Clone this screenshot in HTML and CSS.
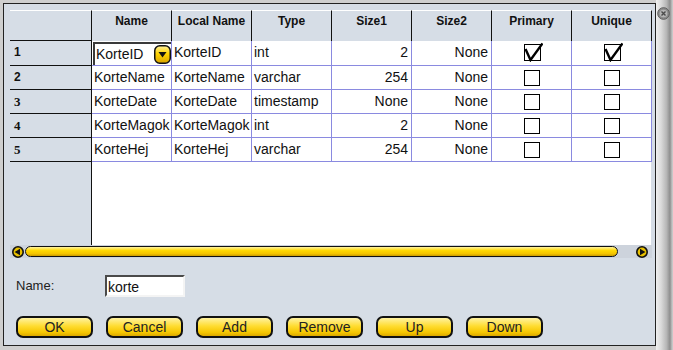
FILE: index.html
```html
<!DOCTYPE html>
<html lang="en">
<head>
    <meta charset="UTF-8">
    <title>Table Editor</title>
    <link rel="stylesheet" href="styles.css">
</head>
<body>
<div class="screen">
    <div class="frame">
        <div class="panel">
            <div class="grid">
                <div class="corner"></div>
                <div class="colHead">Name</div>
                <div class="colHead">Local Name</div>
                <div class="colHead">Type</div>
                <div class="colHead">Size1</div>
                <div class="colHead">Size2</div>
                <div class="colHead">Primary</div>
                <div class="colHead">Unique</div>

                <div class="rowHead">1</div>
                <div class="cell editCell">
                    <div class="editor">
                        <span>KorteID</span>
                        <svg class="comboBtn" width="17" height="19" viewBox="0 0 17 19">
                            <defs>
                                <linearGradient id="cg" x1="0" y1="0" x2="0" y2="1">
                                    <stop offset="0" stop-color="#fff1a0"/>
                                    <stop offset="0.45" stop-color="#ffd400"/>
                                    <stop offset="1" stop-color="#d9a400"/>
                                </linearGradient>
                            </defs>
                            <rect x="0.75" y="0.75" width="15.5" height="17.5" rx="5" fill="url(#cg)" stroke="#111" stroke-width="1.5"/>
                            <path d="M4.5 7 L12.5 7 L8.5 12.5 Z" fill="#111"/>
                        </svg>
                    </div>
                </div>
                <div class="cell">KorteID</div>
                <div class="cell">int</div>
                <div class="cell num">2</div>
                <div class="cell num">None</div>
                <div class="cell check">
                    <svg width="20" height="20" viewBox="0 0 20 20"><rect x="1.5" y="2.5" width="16" height="16" fill="#fff" stroke="#000"/><path d="M2.5 7 L7.5 18 L19.5 1.5" fill="none" stroke="#000" stroke-width="2.4"/></svg>
                </div>
                <div class="cell check">
                    <svg width="20" height="20" viewBox="0 0 20 20"><rect x="1.5" y="2.5" width="16" height="16" fill="#fff" stroke="#000"/><path d="M2.5 7 L7.5 18 L19.5 1.5" fill="none" stroke="#000" stroke-width="2.4"/></svg>
                </div>

                <div class="rowHead">2</div>
                <div class="cell">KorteName</div>
                <div class="cell">KorteName</div>
                <div class="cell">varchar</div>
                <div class="cell num">254</div>
                <div class="cell num">None</div>
                <div class="cell check"><span class="box"></span></div>
                <div class="cell check"><span class="box"></span></div>

                <div class="rowHead serif">3</div>
                <div class="cell">KorteDate</div>
                <div class="cell">KorteDate</div>
                <div class="cell">timestamp</div>
                <div class="cell num">None</div>
                <div class="cell num">None</div>
                <div class="cell check"><span class="box"></span></div>
                <div class="cell check"><span class="box"></span></div>

                <div class="rowHead serif">4</div>
                <div class="cell">KorteMagok</div>
                <div class="cell">KorteMagok</div>
                <div class="cell">int</div>
                <div class="cell num">2</div>
                <div class="cell num">None</div>
                <div class="cell check"><span class="box"></span></div>
                <div class="cell check"><span class="box"></span></div>

                <div class="rowHead serif">5</div>
                <div class="cell">KorteHej</div>
                <div class="cell">KorteHej</div>
                <div class="cell">varchar</div>
                <div class="cell num">254</div>
                <div class="cell num">None</div>
                <div class="cell check"><span class="box"></span></div>
                <div class="cell check"><span class="box"></span></div>

                <div class="rowFill"></div>
                <div class="dataFill"></div>
            </div>

            <div class="hScroll">
                <svg class="arrow" width="12" height="12" viewBox="0 0 12 12"><circle cx="6" cy="6" r="5.2" fill="#e8c000" stroke="#111" stroke-width="1.6"/><path d="M2.6 6 L8 2.8 L8 9.2 Z" fill="#111"/></svg>
                <div class="thumb"></div>
                <div class="track"></div>
                <svg class="arrow" width="12" height="12" viewBox="0 0 12 12"><circle cx="6" cy="6" r="5.2" fill="#e8c000" stroke="#111" stroke-width="1.6"/><path d="M9.4 6 L4 2.8 L4 9.2 Z" fill="#111"/></svg>
            </div>

            <div class="nameRow">
                <span class="label">Name:</span>
                <div class="field">korte</div>
            </div>

            <div class="btnRow">
                <div class="btn">OK</div>
                <div class="btn">Cancel</div>
                <div class="btn">Add</div>
                <div class="btn">Remove</div>
                <div class="btn">Up</div>
                <div class="btn">Down</div>
            </div>
        </div>
    </div>
    <div class="sideBar">
        <svg class="closeBtn" width="13" height="13" viewBox="0 0 13 13">
            <circle cx="6.5" cy="6.5" r="5.8" fill="#8c8c8c" stroke="#5a5a5a"/>
            <circle cx="6.5" cy="6.5" r="3.8" fill="#b4b4b4"/>
            <path d="M4.5 4.5 L8.5 8.5 M8.5 4.5 L4.5 8.5" stroke="#4a4a4a" stroke-width="1.4"/>
        </svg>
    </div>
</div>
</body>
</html>
```

FILE: styles.css
```css
* {
    margin: 0;
    padding: 0;
    box-sizing: border-box;
}

body {
    font: 14px "Liberation Sans", Arial, sans-serif;
    color: #111;
    background: #cfcfcf;
}

.screen {
    width: 673px;
    height: 350px;
    display: flex;
    background: #cfcfcf;
}

.frame {
    width: 656px;
    padding: 3px 0 0 3px;
}

.panel {
    width: 653px;
    height: 343px;
    border: 1px solid #222;
    background: #d6dde6;
    padding: 6px 0 0 6px;
}

/* table */
.grid {
    display: grid;
    grid-template-columns: 82px repeat(7, 80px);
    grid-template-rows: 31px 25px repeat(4, 24px) 83px;
}

.corner,
.colHead {
    border-top: 1px solid #fff;
    border-right: 1px solid #111;
    background: #d6dde6;
}

.corner {
    border-bottom: 1px solid #111;
}

.colHead {
    font-weight: bold;
    font-size: 12px;
    line-height: 14px;
    padding-top: 3px;
    text-align: center;
}

.rowHead {
    border-right: 1px solid #111;
    border-bottom: 1px solid #111;
    font-weight: bold;
    font-size: 12px;
    line-height: 23px;
    padding-left: 4px;
    background: #d6dde6;
}

.rowHead.serif {
    font-family: "Liberation Serif", "Times New Roman", serif;
    font-size: 13px;
}

.cell {
    background: #fff;
    border-right: 1px solid #8a8ae0;
    border-bottom: 1px solid #8a8ae0;
    line-height: 23px;
    padding: 0 2px;
    white-space: nowrap;
    overflow: hidden;
}

.num {
    text-align: right;
    padding-right: 3px;
}

.check {
    display: flex;
    align-items: center;
    justify-content: center;
}

.check svg {
    margin: -2px 0 0 2px;
}

.box {
    width: 16px;
    height: 16px;
    border: 1px solid #000;
    background: #fff;
}

.editCell {
    padding: 1px 0 0 1px;
}

.editor {
    height: 23px;
    border-top: 2px solid #3a3a3a;
    border-left: 2px solid #3a3a3a;
    display: flex;
    align-items: center;
    padding-left: 1px;
    line-height: 19px;
}

.comboBtn {
    margin-left: auto;
    margin-right: 0;
}

.rowFill {
    background: #d6dde6;
    border-right: 1px solid #111;
}

.dataFill {
    grid-column: span 7;
    background: #fff;
    margin-right: 1px;
}

/* scrollbar */
.hScroll {
    width: 642px;
    height: 13px;
    display: flex;
    align-items: center;
    padding: 0 4px 0 2px;
    background: #cdd3dc;
}

.thumb {
    width: 593px;
    height: 11px;
    margin-left: 1px;
    border: 1px solid #111;
    border-radius: 6px;
    background: linear-gradient(#fff3a0, #ffd800 40%, #f4c400 75%, #c99a00);
}

.track {
    flex: 1;
}

/* name field */
.nameRow {
    display: flex;
    margin: 17px 0 0 6px;
}

.label {
    width: 89px;
    font-size: 13px;
    line-height: 16px;
    margin-top: 3px;
    color: #222;
}

.field {
    width: 80px;
    height: 22px;
    background: #fff;
    border: 2px solid;
    border-color: #4a4a4a #f4f4f4 #f4f4f4 #4a4a4a;
    padding: 1px 0 0 1px;
    line-height: 18px;
}

/* buttons */
.btnRow {
    display: flex;
    gap: 13px;
    margin: 19px 0 0 6px;
}

.btn {
    width: 77px;
    height: 22px;
    border: 2px solid #111;
    border-radius: 7px;
    background: linear-gradient(#fff2a0, #ffdc30 45%, #f5c600 80%, #dba800);
    text-align: center;
    line-height: 18px;
    color: #222;
}

/* window side */
.sideBar {
    width: 17px;
    height: 350px;
    background: linear-gradient(to right, #f0f0f0, #dadada 30%, #b6b6b6 62%, #8e8e8e 82%, #b8b8b8 92%, #d0d0d0);
    padding: 7px 0 0 1px;
}

.closeBtn {
    display: block;
}
```
